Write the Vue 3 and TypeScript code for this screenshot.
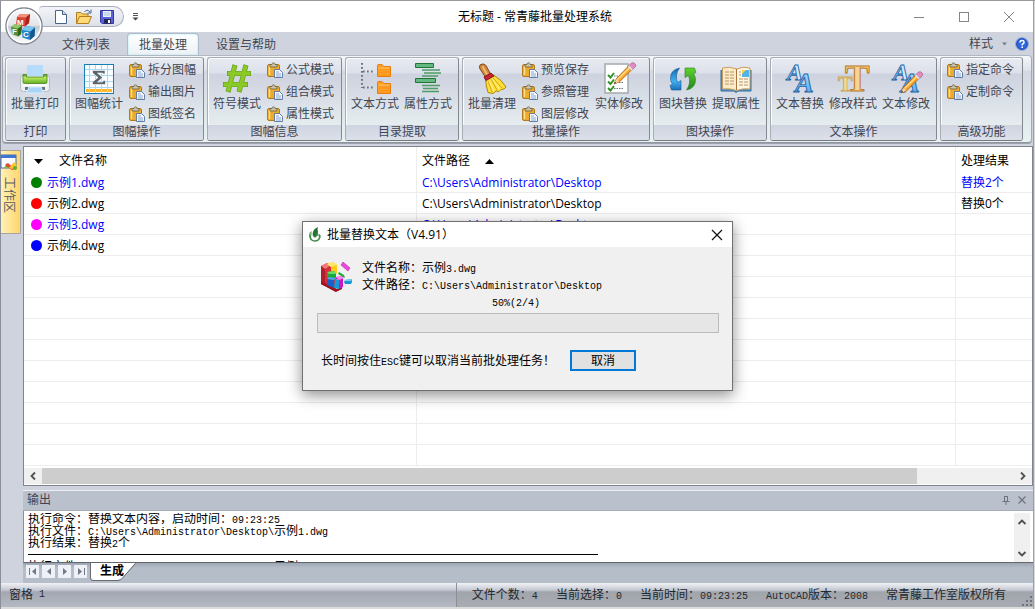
<script setup lang="ts">
import { h, type FunctionalComponent } from 'vue'

interface Big { label: string; icon: string }
interface Group { title: string; cells: (Big | string[])[] }
interface FileRow { name: string; path: string; result: string; dot: string; active: boolean }

const isList = (c: Big | string[]): c is string[] => Array.isArray(c)

/* Chinese text with half-width Latin runs set in a monospaced face */
const Mixed: FunctionalComponent<{ text: string }> = (props) =>
  props.text
    .split(/([\x20-\x7e]+)/)
    .filter(Boolean)
    .map((run) => (/^[\x20-\x7e]/.test(run) ? h('span', { class: 'half' }, run) : run))
Mixed.props = ['text']

const tabs = ['文件列表', '批量处理', '设置与帮助']

const groups: Group[] = [
  { title: '打印', cells: [{ label: '批量打印', icon: 'print' }] },
  { title: '图幅操作', cells: [{ label: '图幅统计', icon: 'stats' }, ['拆分图幅', '输出图片', '图纸签名']] },
  { title: '图幅信息', cells: [{ label: '符号模式', icon: 'hash' }, ['公式模式', '组合模式', '属性模式']] },
  { title: '目录提取', cells: [{ label: '文本方式', icon: 'tree' }, { label: '属性方式', icon: 'bars' }] },
  {
    title: '批量操作',
    cells: [{ label: '批量清理', icon: 'broom' }, ['预览保存', '参照管理', '图层修改'], { label: '实体修改', icon: 'check' }],
  },
  { title: '图块操作', cells: [{ label: '图块替换', icon: 'swap' }, { label: '提取属性', icon: 'book' }] },
  {
    title: '文本操作',
    cells: [{ label: '文本替换', icon: 'aa' }, { label: '修改样式', icon: 'tt' }, { label: '文本修改', icon: 'aapen' }],
  },
  { title: '高级功能', cells: [['指定命令', '定制命令']] },
]

const pencil = (t: string) =>
  `<g transform="${t}"><path d="M0 0L2.500 -5.500L15.500 -19L19 -15.500L5.500 -2.200Z" fill="#fba62c" stroke="#a8621c" stroke-width=".9"/><path d="M3.500 -4.500L16.800 -17.600" stroke="#ffe08a" stroke-width="1.400"/><path d="M15 -18.500L17.500 -21Q19.500 -22 21.300 -20Q22.500 -18 21 -16.800L18.600 -14.700Z" fill="#e58ac0" stroke="#a5618f" stroke-width=".7"/><path d="M13.800 -17.300L15.200 -18.700L18.800 -15L17.300 -13.500Z" fill="#d9dde3"/><path d="M0 0L2.300 -5L5 -2.200Z" fill="#f5d9ab"/><path d="M0 0L1 -2.200L2.200 -1Z" fill="#333"/></g>`

const letters =
  '<defs><linearGradient id="ga" x1="0" y1="0" x2="0" y2="1"><stop offset="0" stop-color="#b9e0fd"/><stop offset="1" stop-color="#4aa5f2"/></linearGradient></defs><g font-family="Liberation Serif, serif" font-style="italic" font-weight="bold" stroke="#1d64a8" stroke-width=".9"><text x="3" y="16" font-size="24" fill="#d3ecff">A</text><text x="11" y="28" font-size="28" fill="url(#ga)">A</text></g>'

const art: Record<string, string> = {
  print:
    '<defs><linearGradient id="gp" x1="0" y1="0" x2="0" y2="1"><stop offset="0" stop-color="#4f8f1d"/><stop offset=".35" stop-color="#b9ea5c"/><stop offset="1" stop-color="#62ad22"/></linearGradient></defs><rect x="1.500" y="11.500" width="29" height="16" rx="3" fill="#eef1f3" stroke="#b4bbc1"/><path d="M8 1H24V12H8Z" fill="#b5dcfa"/><path d="M4 10.500H7.500V13H24.500V10.500H28V18Q28 19.500 26.500 19.500H5.500Q4 19.500 4 18Z" fill="url(#gp)" stroke="#4b8421" stroke-width=".8"/><rect x="4" y="20.500" width="24" height="1.500" fill="#fff"/><path d="M6 23H26V26H6Z" fill="#69737a"/><path d="M10 23H22L24.500 29H7.500Z" fill="#a9d4f5" stroke="#d8edfc"/>',
  stats:
    '<rect x="1" y="0" width="30" height="30" fill="#157fb4"/><rect x="2" y="1" width="28" height="28" fill="#fafdff"/><path d="M6.500 1V29M12.500 1V29M18.500 1V29M24.500 1V29M2 5.500H30M2 11.500H30M2 17.500H30M2 23.500H30" stroke="#abd8f1"/><path d="M3 25H29V28H3Z" fill="#ffb52c"/><path d="M6.500 25V28M12.500 25V28M18.500 25V28M24.500 25V28" stroke="#ffd987"/><path d="M22 10V6.500H9.500V9L15 13.500L9.500 18V20.500H22.500V16.500H20.500L19.500 18H14.500L19.500 13.500L14.500 9H19.500L20.500 10Z" fill="#5b646b" stroke="#fff" stroke-width=".6"/>',
  hash: '<path d="M14 1L7 28M25 1L18 28M6 9.500H30M2 20.500H27" stroke="#639d19" stroke-width="5"/><path d="M13.800 1.600L7.200 27.400M24.800 1.600L18.200 27.400M6.600 9.500H29.400M2.600 20.500H26.400" stroke="#8bc928" stroke-width="3.800"/>',
  tree:
    '<path d="M3 -1V24M4 7.500H16M4 23.500H16" fill="none" stroke="#6d757b" stroke-width="2" stroke-dasharray="1.700 2.300"/><g fill="#ff9c20" stroke="#eb7d0c"><path d="M18.500 12.500V1.500Q18.500 .5 19.500 .5H23L25 2.500H31.500V12.500Z"/><path d="M18.500 29.500V18.500Q18.500 17.500 19.500 17.500H23L25 19.500H31.500V29.500Z"/></g><path d="M19.500 4H30.500M19.500 21H30.500" stroke="#ffc46f"/>',
  bars: '<g fill="#65b87f" stroke="#22743b"><path d="M3.500 -.5H21.500V3.500H3.500Z"/><path d="M3.500 14.500H23.500V18.500H3.500Z"/></g><path d="M10 6H28M12 9H29M10 12H26M10 21.500H28M11 24.500H26M10 27.500H27" stroke="#4f9d64" stroke-width="1.600"/>',
  broom:
    '<path d="M4 1Q7 -1.500 10 1.500L15 11L10 14L4 5Q3 3 4 1Z" fill="#d38a3e" stroke="#7d4a1c"/><path d="M6.500 2.500L12 12" stroke="#f1bd78" stroke-width="1.600"/><path d="M9.500 15L17.500 11Q26 16 30 23L28 25L25 25.500L23 27.500L20 27L17 29.500L12 28.500Q10 22 9.500 15Z" fill="#ffe03a" stroke="#b08406"/><path d="M12 17L16 28M15 15L21 26M17 14L26 24" stroke="#d3a514"/><path d="M13 17L18 27M16 15L23.500 25" stroke="#fff49a"/><path d="M8 13L15 9L18 12L10 16.500Z" fill="#c7222e" stroke="#831722"/>',
  check:
    '<rect x="2" y="0" width="23" height="29" fill="#fff" stroke="#a7adb0" stroke-width="1.600"/><path d="M11 12H20M11 18.500H20M11 24.500H21" stroke="#697278" stroke-dasharray="1.500 1"/><path d="M5 11L7.500 13.500L11 9M5 17.500L7.500 20L11 15.500M5 24L7.500 26.500L11 22" fill="none" stroke="#329222" stroke-width="2"/>' +
    pencil('translate(11 20)'),
  swap:
    '<defs><linearGradient id="gb" x1="0" y1="0" x2="0" y2="1"><stop offset="0" stop-color="#1565ab"/><stop offset=".6" stop-color="#42b2f0"/><stop offset="1" stop-color="#1a6fb7"/></linearGradient><linearGradient id="gg" x1="0" y1="1" x2="0" y2="0"><stop offset="0" stop-color="#5ed42a"/><stop offset="1" stop-color="#228320"/></linearGradient></defs><path d="M12.500 4Q3 6 3.500 15Q3.700 18 5.500 20L3 21.500L4.500 26H14V16.500L10.500 18.500Q7.500 11 12.500 4Z" fill="url(#gb)" stroke="#165d99" stroke-width=".6"/><path transform="rotate(180 16 15)" d="M12.500 4Q3 6 3.500 15Q3.700 18 5.500 20L3 21.500L4.500 26H14V16.500L10.500 18.500Q7.500 11 12.500 4Z" fill="url(#gg)" stroke="#26812a" stroke-width=".6"/>',
  book: '<path d="M1 6V27H14L16 28.500L18 27H31V6" fill="#5796c4" stroke="#2c6fa5"/><path d="M2.500 4Q10 2 16.500 5V26.500Q10 24 2.500 25Z" fill="#fdebc8" stroke="#c89a60"/><path d="M30 4Q23 2 16.500 5V26.500Q23 24 30 25Z" fill="#fff5e0" stroke="#c89a60"/><path d="M16.500 5V26" stroke="#a9743c"/><path d="M5 8H14M5 11H14M5 14H14M5 17H14M5 20H14M19 8H21M19 11H21M19 15H28M19 18H28M19 21H28" stroke="#b39468" stroke-dasharray="4 1"/><path d="M22 6H29V13H22Z" fill="#50b4e7"/><path d="M22 6H26L22 10Z" fill="#ffd34a"/>',
  aa: letters,
  tt: '<g font-family="Liberation Serif, serif" font-weight="bold"><text x="1" y="27" font-size="22" fill="#f3dc9a" stroke="#cba554" stroke-width=".8">T</text><text x="8" y="27" font-size="37" fill="#f9d48c" stroke="#b9771f">T</text></g>',
  aapen: letters + pencil('translate(11 29)'),
}

const paste =
  '<rect x=".5" y="2.500" width="12" height="12" rx="1.500" fill="#edab2e" stroke="#b27a1d"/><path d="M2.500 4V13" stroke="#ffe08c" stroke-width="1.400"/><path d="M3 5V2.500H5Q5 .8 6.500 .8Q8 .8 8 2.500H10V5Z" fill="#c9c3b0" stroke="#6d6039" stroke-width=".8"/><path d="M7.500 7.500H12.500L15.500 10.500V15.500H7.500Z" fill="#f3f8ff" stroke="#56719c" stroke-width=".9"/><path d="M9 10H12M9 12H14M9 14H14" stroke="#6e8fc1" stroke-width=".8"/>'

const desktop = 'C:\\Users\\Administrator\\Desktop'
const files: FileRow[] = [
  { name: '示例1.dwg', path: desktop, result: '替换2个', dot: 'green', active: true },
  { name: '示例2.dwg', path: desktop, result: '替换0个', dot: 'red', active: false },
  { name: '示例3.dwg', path: desktop, result: '', dot: 'magenta', active: true },
  { name: '示例4.dwg', path: desktop, result: '', dot: 'blue', active: false },
]
const blankRows = 10

const log = ['执行命令：替换文本内容，启动时间：09:23:25', `执行文件：${desktop}\\示例1.dwg`, '执行结果：替换2个']
const nextLog = `执行文件：${desktop}\\示例2.dwg`

const status = ['文件个数：4', '当前选择：0', '当前时间：09:23:25', 'AutoCAD版本：2008', '常青藤工作室版权所有']
</script>

<template>
  <div class="window">
    <header class="titlebar">
      <div class="quick">
        <button aria-label="新建"><svg width="16" height="16" viewBox="0 0 16 16"><path d="M2.500 1.500H9.500L13.500 5.500V14.500H2.500Z" fill="#fdfeff" stroke="#49648a" /><path d="M9.500 1.500V5.500H13.500" fill="#cfdcf0" stroke="#49648a" /></svg></button>
        <button aria-label="打开"><svg width="18" height="16" viewBox="0 0 18 16"><path d="M1.500 14V3.500H6L7.500 5H13V9" fill="#f7cf62" stroke="#b07d21" /><path d="M1.500 14.500L4.500 7.500H16.500L13.500 14.500Z" fill="#ffdb78" stroke="#b07d21" /><path d="M9.500 3Q12 -.5 15 3M16 .5V4H12.500" fill="none" stroke="#426699" /></svg></button>
        <button aria-label="保存"><svg width="16" height="16" viewBox="0 0 16 16"><path d="M1.500 1.500H14.500V14.500H3L1.500 13Z" fill="#5a60d8" stroke="#3637a0" /><rect x="4" y="2" width="8" height="6" fill="#eaf2ff" /><path d="M5 4H11M5 6H11" stroke="#a9bce3" /><rect x="5" y="10" width="7" height="4.500" fill="#24265a" /><rect x="9" y="11" width="2" height="3" fill="#fff" /></svg></button>
      </div>
      <button class="more" aria-label="自定义"><svg width="7" height="8" viewBox="0 0 7 8"><path d="M1 .5H6M1 2.500H6" stroke="#555" /><path d="M.5 4.500H6.500L3.500 7.500Z" fill="#444" /></svg></button>
      <h1>无标题 - 常青藤批量处理系统</h1>
      <div class="winbtns">
        <button aria-label="最小化"><svg width="12" height="12" viewBox="0 0 12 12"><path d="M1 6.500H11" stroke="#858585" /></svg></button>
        <button aria-label="最大化"><svg width="12" height="12" viewBox="0 0 12 12"><rect x="1.500" y="1.500" width="9" height="9" fill="none" stroke="#858585" /></svg></button>
        <button aria-label="关闭窗口"><svg width="12" height="12" viewBox="0 0 12 12"><path d="M1 1L11 11M11 1L1 11" stroke="#858585" /></svg></button>
      </div>
    </header>

    <button class="orb" aria-label="应用菜单">
      <svg width="40" height="40" viewBox="0 0 40 40">
        <defs>
          <linearGradient id="orb" x1="0" y1="0" x2="0" y2="1"><stop offset="0" stop-color="#fafafc" /><stop offset=".48" stop-color="#e3e5e9" /><stop offset=".52" stop-color="#c4c8cf" /><stop offset="1" stop-color="#fff" /></linearGradient>
        </defs>
        <circle cx="20" cy="20" r="18" fill="url(#orb)" stroke="#838892" stroke-width="1.500" />
        <circle cx="20" cy="20" r="16.600" fill="none" stroke="#fff" stroke-width="1.400" />
        <path d="M13 11L16 8H26L25 17L21 20.500L12 19Z" fill="#d94334" /><path d="M13 11L16 8H26L22 11.500Z" fill="#f0907c" /><path d="M22 11.500L26 8L25 17L21 20.500Z" fill="#a9241c" />
        <path d="M7 21L11 18L18 20L17 28L14 30.500L8 28Z" fill="#568f38" /><path d="M7 21L11 18L18 20L14 22.500Z" fill="#94c76b" /><path d="M14 22.500L18 20L17 28L14 30.500Z" fill="#2f651b" />
        <path d="M18 24L22 20L31 21.500L30.500 30L26 34L18.500 31.500Z" fill="#2384c6" /><path d="M18 24L22 20L31 21.500L26.500 25.500Z" fill="#7cc5ee" /><path d="M26.500 25.500L31 21.500L30.500 30L26 34Z" fill="#13588f" />
        <g font-family="Liberation Sans, sans-serif" font-weight="bold" fill="#fff"><text x="13" y="19" font-size="8">M</text><text x="8" y="28" font-size="8">F</text><text x="19" y="31" font-size="8">C</text></g>
      </svg>
    </button>

    <nav class="tabs">
      <button v-for="(t, i) in tabs" :key="t" class="tab" :class="{ current: i === 1 }">{{ t }}</button>
      <span class="grow"></span>
      <button class="style">样式<svg width="5" height="4" viewBox="0 0 5 4"><path d="M0 .5H5L2.500 3.500Z" fill="#777d86" /></svg></button>
      <button class="help" aria-label="帮助">
        <svg width="14" height="14" viewBox="0 0 14 14"><circle cx="7" cy="7" r="6.300" fill="#2f66dc" stroke="#8fa9d8" stroke-width="1.200" /><circle cx="7" cy="7" r="5.300" fill="none" stroke="#1b42a8" stroke-width=".8" /><path d="M5 5.500Q5 3.500 7 3.500Q9.200 3.500 9 5.500Q8.800 6.500 7.200 7.300V8.500" fill="none" stroke="#fff" stroke-width="1.500" /><rect x="6.400" y="9.500" width="1.600" height="1.500" fill="#fff" /></svg>
      </button>
    </nav>

    <section class="ribbon">
      <div v-for="g in groups" :key="g.title" class="group">
        <div class="cells">
          <template v-for="(c, i) in g.cells" :key="i">
            <div v-if="isList(c)" class="stack" :class="{ alone: g.cells.length === 1 }">
              <button v-for="s in c" :key="s" class="small"><svg width="16" height="16" viewBox="0 0 16 16" v-html="paste"></svg>{{ s }}</button>
            </div>
            <button v-else class="big"><svg width="32" height="32" viewBox="0 0 32 32" v-html="art[c.icon]"></svg>{{ c.label }}</button>
          </template>
        </div>
        <div class="caption">{{ g.title }}</div>
      </div>
    </section>

    <div class="body">
      <aside class="dock">
        <button class="sidetab">
          <svg width="18" height="17" viewBox="0 0 18 17"><rect x="1" y="1" width="15" height="13" fill="#fafdff" stroke="#486da5" /><rect x="1" y="1" width="15" height="3" fill="#3e75d0" /><path d="M4 14L7 9L10 14Z" fill="#74bb3f" /><path d="M5 11L8 9L15 15L12 16Z" fill="#e9433b" /><path d="M9 14L14 8L17 12L13 15Z" fill="#ffc42c" /><circle cx="15" cy="14" r="2" fill="#5bae38" /></svg>
          <span>工作区</span>
        </button>
      </aside>

      <main class="work">
        <div class="listbox">
          <table>
            <colgroup><col class="c-name" /><col /><col class="c-result" /></colgroup>
            <thead>
              <tr>
                <th><svg class="menu" width="9" height="5" viewBox="0 0 9 5"><path d="M0 0H9L4.500 5Z" /></svg>文件名称</th>
                <th>文件路径<svg class="sort" width="9" height="5" viewBox="0 0 9 5"><path d="M0 5H9L4.500 0Z" /></svg></th>
                <th>处理结果</th>
              </tr>
            </thead>
            <tbody>
              <tr v-for="f in files" :key="f.name" :class="{ active: f.active }">
                <td class="name"><i :class="f.dot"></i>{{ f.name }}</td>
                <td>{{ f.path }}</td>
                <td>{{ f.result }}</td>
              </tr>
              <tr v-for="n in blankRows" :key="n"><td></td><td></td><td></td></tr>
            </tbody>
          </table>
          <div class="hscroll">
            <button aria-label="向左"><svg width="6" height="8" viewBox="0 0 6 8"><path d="M5 .5L1.500 4L5 7.500" /></svg></button>
            <div class="track"><div class="thumb"></div></div>
            <button aria-label="向右"><svg width="6" height="8" viewBox="0 0 6 8"><path d="M1 .5L4.500 4L1 7.500" /></svg></button>
          </div>
        </div>

        <section class="output">
          <header>
            <h2>输出</h2>
            <button aria-label="固定"><svg width="8" height="9" viewBox="0 0 8 9"><path d="M2 .5H6M2.500 0V5M5.500 0V5M.5 5.500H7.500M4 5V9" fill="none" stroke="#6e737c" /></svg></button>
            <button aria-label="关闭输出"><svg width="8" height="8" viewBox="0 0 8 8"><path d="M.5 .5L7.500 7.500M7.500 .5L.5 7.500" stroke="#6e737c" stroke-width="1.200" /></svg></button>
          </header>
          <div class="logbox">
            <div class="log">
              <p v-for="l in log" :key="l"><Mixed :text="l" /></p>
              <hr />
              <p><Mixed :text="nextLog" /></p>
            </div>
            <div class="vscroll">
              <button aria-label="向上"><svg width="8" height="6" viewBox="0 0 8 6"><path d="M.5 5L4 1.500L7.500 5" /></svg></button>
              <button aria-label="向下"><svg width="8" height="6" viewBox="0 0 8 6"><path d="M.5 1L4 4.500L7.500 1" /></svg></button>
            </div>
          </div>
          <footer>
            <button class="step" aria-label="第一个"><svg width="8" height="7" viewBox="0 0 8 7"><path d="M0 0H1V7H0ZM7 0V7L3 3.500Z" /></svg></button>
            <button class="step" aria-label="上一个"><svg width="8" height="7" viewBox="0 0 8 7"><path d="M6 0V7L2 3.500Z" /></svg></button>
            <button class="step" aria-label="下一个"><svg width="8" height="7" viewBox="0 0 8 7"><path d="M2 0V7L6 3.500Z" /></svg></button>
            <button class="step" aria-label="最后一个"><svg width="8" height="7" viewBox="0 0 8 7"><path d="M1 0V7L5 3.500ZM7 0H8V7H7Z" /></svg></button>
            <button class="sheet"><svg width="46" height="18" viewBox="0 0 46 18"><path d="M1 0V15Q1 17 3 17H28Q31 17 33 14L45 0Z" fill="#fff" /><path d="M.5 0V15Q.5 17.500 3 17.500H28Q31 17.500 33 14.500L45.500 .5" fill="none" stroke="#686b70" /></svg><span>生成</span></button>
          </footer>
        </section>
      </main>
    </div>

    <footer class="status">
      <div class="pane"><Mixed text="窗格 1" /></div>
      <div class="info"><span v-for="s in status" :key="s"><Mixed :text="s" /></span></div>
      <svg class="grip" width="12" height="12" viewBox="0 0 12 12"><path d="M9 1h2v2h-2zM5 5h2v2h-2zM9 5h2v2h-2zM1 9h2v2h-2zM5 9h2v2h-2zM9 9h2v2h-2z" fill="#6e727d" /></svg>
    </footer>

    <div class="layer">
      <div class="dialog" role="dialog" aria-labelledby="dlg-title">
        <header>
          <svg width="14" height="16" viewBox="0 0 14 16"><path d="M9 2Q3 5 5 9Q7 12 9 9L12 7Q14 11 10 14Q6 16 2.500 13Q0 9 2 6L3.500 7Q2 11 5 13Q10 14 11 10" fill="#3f8a46" /><path d="M5 6Q5 2 10 0Q9 3 10 5Q8 6 7 10Q5 9 5 6Z" fill="#277232" /><path d="M1 6L4 4L3 9Z" fill="#79b57b" /></svg>
          <h2 id="dlg-title">批量替换文本（V4.91）</h2>
          <button aria-label="关闭"><svg width="12" height="12" viewBox="0 0 12 12"><path d="M1 1L11 11M11 1L1 11" stroke="#111" stroke-width="1.200" /></svg></button>
        </header>
        <div class="content">
          <div class="facts">
            <svg width="34" height="34" viewBox="0 0 34 34">
              <path d="M2 6L8 3L17 8V32L2 24Z" fill="#d92d38" /><path d="M2 6L8 3L12 5L6 9Z" fill="#f2797c" /><path d="M2 6L6 9V26L2 24Z" fill="#b3202c" /><path d="M2 24L17 32L23 29V27L17 29L2 21Z" fill="#9b1422" />
              <path d="M8 4L14 2L18 5V14L12 11V7Z" fill="#ffcb17" /><path d="M8 4L14 2L18 5L12 7Z" fill="#ffe96c" />
              <path d="M8 12L15 11L17 14V20L8 18Z" fill="#18a936" /><path d="M8 12L15 11L17 14L10 14Z" fill="#67dc71" />
              <path d="M8 19L15 20V28L8 25Z" fill="#1562cc" /><path d="M8 19L15 20L17 18L10 17Z" fill="#49a7f2" /><path d="M16 19L20 20V29L15 28Z" fill="#159cd4" />
              <path d="M17 17L24 16V27L20 29V20L17 19Z" fill="#cc17c3" /><path d="M17 17L24 16L25 18L20 20Z" fill="#f789ee" />
              <path d="M24 2L31 8L29 11L22 5Z" fill="#ed45dc" stroke="#b42bab" stroke-width=".6" /><path d="M20 12L25 15L26 18L19 14Z" fill="#1ba637" /><path d="M26 20L33 19V22L32 24H26L25 22Z" fill="#1698d8" /><path d="M26 20L33 19L32 21H26Z" fill="#75d4f7" />
            </svg>
            <div>
              <p><Mixed text="文件名称：示例3.dwg" /></p>
              <p><Mixed :text="'文件路径：' + desktop" /></p>
            </div>
          </div>
          <p class="percent"><Mixed text="50%(2/4)" /></p>
          <div class="bar" role="progressbar" aria-label="进度"></div>
          <div class="actions">
            <p><Mixed text="长时间按住ESC键可以取消当前批处理任务！" /></p>
            <button>取消</button>
          </div>
        </div>
      </div>
    </div>
  </div>
</template>

<style>
html, body { margin: 0; background: #e6e6e6; }
.half { font-family: "Liberation Mono", monospace; font-size: 10px; line-height: 1; white-space: pre; }
</style>

<style scoped>
* { box-sizing: border-box; }
button { display: flex; align-items: center; justify-content: center; margin: 0; padding: 0; border: 0; background: none; font: inherit; color: inherit; white-space: nowrap; }
svg { display: block; flex: none; overflow: visible; }
h1, h2, p { margin: 0; font-size: 12px; font-weight: normal; white-space: nowrap; }

.window { position: relative; display: flex; flex-direction: column; min-height: 100vh; padding: 0 2px 2px 1px; border-top: 1px solid #999; background: #cfd3dd; background-clip: padding-box; box-shadow: inset 1px 0 #8b8f98, inset -1px 0 #d9d9d9, inset -2px 0 #9a9ea6, inset 0 -2px #dcdcdc; font: 12px/16px "Liberation Sans", "Noto Sans CJK SC", sans-serif; color: #3f4652; }

.titlebar { display: flex; align-items: center; height: 31px; background: #fff; }
.titlebar h1 { flex: 1; padding-left: 28px; text-align: center; color: #000; font-family: "Open Sans", "Noto Sans CJK SC", sans-serif; }
.quick { display: flex; align-items: center; gap: 6px; height: 21px; margin-left: 38px; padding: 0 8px 0 14px; border: 1px solid #a9afbb; border-left: 0; border-radius: 4px 11px 11px 0; background: linear-gradient(#f2f4f8, #dde1e9); }
.more { width: 22px; height: 20px; }
.winbtns { display: flex; padding-right: 2px; }
.winbtns button { width: 45px; height: 30px; }
.orb { position: absolute; left: 4px; top: 5px; }

.tabs { display: flex; align-items: flex-end; height: 23px; padding: 0 4px 0 49px; }
.tab { height: 22px; padding: 0 11px; border: 1px solid transparent; border-bottom: 0; border-radius: 4px 4px 0 0; margin-right: 5px; }
.tab.current { border-color: #aebccb; background: linear-gradient(#fff, #edf1f5); box-shadow: inset 0 0 2px #90eef2; }
.grow { flex: 1; }
.style { gap: 9px; height: 22px; padding-right: 8px; }
.help { height: 22px; }

.ribbon { display: flex; gap: 3px; margin: 0 1px; height: 88px; padding: 1px 2px; border: 1px solid #b2b7c1; border-color: #b2b7c1 #a3a8b2 #8f939d; border-radius: 4px; background: linear-gradient(#f5f6f9, #dfe3eb 16%, #d3d8e2 18%, #e8f2f2); box-shadow: 0 1px #9da2ad; }
.group { display: flex; flex-direction: column; border: 1px solid #9a9fa8; border-color: #a8acb5 #85888f #777a80 #a8acb5; border-radius: 3px; background: linear-gradient(#e8ebf1, #dce0ea 15px, #cdd2df 16px, #e9f0f1 90%); box-shadow: inset 1px 1px #fafbfd; }
.cells { display: flex; flex: 1; gap: 5px; padding: 0 6px 0 5px; }
.big { flex-direction: column; justify-content: flex-start; width: 48px; padding-top: 6px; line-height: 16px; }
.stack { display: flex; flex-direction: column; padding: 1px 1px 0; }
.stack.alone { padding-right: 2px; }
.small { gap: 3px; height: 22px; }
.caption { height: 15px; line-height: 15px; text-align: center; background: linear-gradient(#cfd4e1, #dce0e9); border-radius: 0 0 2px 2px; }

.body { display: flex; flex: 1; padding-top: 3px; }
.dock { width: 22px; padding-top: 4px; }
.sidetab { flex-direction: column; justify-content: flex-start; gap: 6px; width: 20px; height: 84px; padding: 3px 3px 0 0; border: 1px solid #a5a69f; border-left: 0; background: linear-gradient(90deg, #fff1b6, #ffd66d); color: #555b66; }
.sidetab span { writing-mode: vertical-rl; text-orientation: sideways; line-height: 16px; }
.work { display: flex; flex: 1; flex-direction: column; min-width: 0; }

.listbox { display: flex; flex: 1; flex-direction: column; border: 1px solid #7f8590; background: #fff; color: #000; font-family: "Open Sans", "Noto Sans CJK SC", sans-serif; }
table { width: 100%; table-layout: fixed; border-collapse: separate; border-spacing: 0; }
.c-name { width: 393px; }
.c-result { width: 76px; }
th, td { overflow: hidden; padding: 2px 0 0 5px; border-right: 1px solid #ededed; font-weight: normal; text-align: left; white-space: nowrap; line-height: 18px; }
th:last-child, td:last-child { border-right: 0; }
th { height: 25px; }
td { height: 21px; border-bottom: 1px solid #ededed; }
th svg { display: inline-block; vertical-align: middle; }
.menu { margin: 0 16px 0 5px; }
.sort { margin-left: 15px; }
.active { color: #00f; }
td i { display: inline-block; width: 11px; height: 11px; margin: 0 5px 0 2px; border-radius: 50%; vertical-align: -1px; }
.green { background: #008000; }
.red { background: #f00; }
.magenta { background: #f0f; }
.blue { background: #00f; }
.hscroll { display: flex; height: 16px; margin: auto 0 1px; background: #f0f0f0; }
.hscroll button { width: 18px; }
.track { flex: 1; }
.thumb { width: 90%; height: 100%; background: #cdcdcd; }
.hscroll path, .vscroll path { fill: none; stroke: #505050; stroke-width: 1.800px; }

.output { margin-top: 4px; }
.output header { display: flex; align-items: center; gap: 8px; height: 21px; padding: 0 7px 1px 4px; border-top: 1px solid #eceff5; border-bottom: 1px solid #a7adb8; background: #bac1cc; }
.output h2 { flex: 1; }
.logbox { display: flex; height: 52px; padding: 2px 3px 0 4px; border-left: 1px solid #8b919b; border-bottom: 1px solid #62666d; background: #fff; color: #000; }
.log { flex: 1; height: 49px; overflow: hidden; line-height: 12px; }
.log p { height: 12px; line-height: 12px; }
.log hr { width: 570px; height: 1px; margin: 5px 0 6px; border: 0; background: #000; }
.vscroll { display: flex; flex-direction: column; justify-content: space-between; width: 16px; background: #f0f0f0; }
.vscroll button { height: 17px; }
.output footer { display: flex; align-items: flex-start; gap: 3px; height: 20px; padding-left: 3px; background: linear-gradient(#9ea6b3, #b5bdc9 5px); }
.step { width: 13px; height: 13px; margin-top: 2px; background: #eef2f8; }
.step path { fill: #737984; }
.sheet { position: relative; justify-content: flex-start; height: 18px; }
.sheet span { position: absolute; left: 10px; top: 0; color: #000; font-weight: bold; }

.status { display: flex; align-items: center; position: relative; height: 24px; color: #24282f; background: linear-gradient(#f1f2f6, #c5c8d2 7px, #a3a7b2 9px, #b4b9c3); }
.pane { display: flex; flex: 1; align-items: center; align-self: stretch; padding-left: 8px; border-right: 1px solid #8b9098; box-shadow: 1px 0 #dfe1e6; }
.info { display: flex; gap: 18px; padding: 0 27px 0 15px; white-space: nowrap; background: linear-gradient(#f1f2f6, #c5c8d2 7px, #a0a4ab 9px, #a9adb3); line-height: 24px; }
.grip { position: absolute; right: 0; bottom: 0; }

.layer { position: absolute; inset: 0; display: grid; place-items: center; padding-top: 2px; pointer-events: none; }
.dialog { width: 431px; pointer-events: auto; border: 1px solid #707070; background: #f0f0f0; box-shadow: 0 4px 14px rgb(0 0 0 / 45%); color: #000; }
.dialog > header { display: flex; align-items: center; gap: 5px; height: 25px; padding: 0 9px 0 5px; background: #fff; font-family: "Open Sans", "Noto Sans CJK SC", sans-serif; }
.dialog h2 { flex: 1; }
.content { padding: 13px 13px 19px 14px; }
.facts { display: flex; gap: 9px; padding-left: 2px; }
.facts p { line-height: 17px; }
.percent { height: 17px; line-height: 17px; margin-left: 175px; }
.bar { height: 20px; margin-top: 2px; border: 1px solid #bcbcbc; background: #e6e6e6; }
.actions { display: flex; align-items: center; gap: 16px; margin-top: 17px; padding-left: 4px; }
.actions p { width: 233px; }
.actions button { width: 66px; height: 21px; border: 2px solid #0078d7; background: #e1e1e1; }
</style>
